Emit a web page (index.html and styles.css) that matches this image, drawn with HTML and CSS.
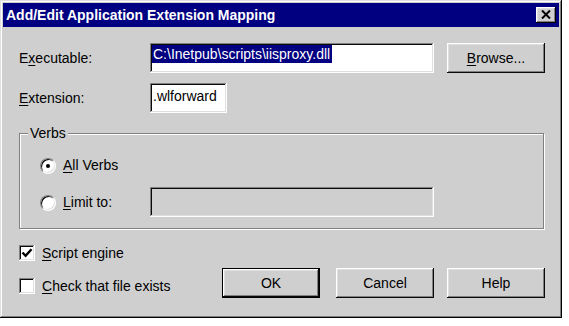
FILE: index.html
```html
<!DOCTYPE html>
<html lang="en">
<head>
    <meta charset="UTF-8">
    <title>Add/Edit Application Extension Mapping</title>
    <link rel="stylesheet" href="styles.css">
</head>
<body>
    <div class="window">
        <div class="titlebar">
            <span class="title">Add/Edit Application Extension Mapping</span>
            <button class="close-btn">
                <svg width="10" height="9" viewBox="0 0 10 9"><path d="M1 0.5 L9 8.5 M9 0.5 L1 8.5" stroke="#000" stroke-width="2"/></svg>
            </button>
        </div>

        <div class="content">
            <div class="row row-exec">
                <span class="field-label">E<u>x</u>ecutable:</span>
                <div class="textbox textbox-wide"><span class="selected">C:\Inetpub\scripts\iisproxy.dll</span></div>
                <button class="btn btn-browse"><u>B</u>rowse...</button>
            </div>

            <div class="row row-ext">
                <span class="field-label"><u>E</u>xtension:</span>
                <div class="textbox textbox-short">.wlforward</div>
            </div>

            <div class="group">
                <span class="group-title">Verbs</span>
                <div class="option">
                    <span class="radio checked"></span>
                    <span class="option-label"><u>A</u>ll Verbs</span>
                </div>
                <div class="option">
                    <span class="radio"></span>
                    <span class="option-label limit-label"><u>L</u>imit to:</span>
                    <div class="textbox textbox-wide disabled"></div>
                </div>
            </div>

            <div class="footer">
                <div class="checks">
                    <div class="check-row">
                        <span class="checkbox">
                            <svg width="12" height="12" viewBox="0 0 12 12"><path d="M1.5 5.5 L4.6 8.8 L10.5 2.2" fill="none" stroke="#000" stroke-width="2.4"/></svg>
                        </span>
                        <span><u>S</u>cript engine</span>
                    </div>
                    <div class="check-row">
                        <span class="checkbox"></span>
                        <span><u>C</u>heck that file exists</span>
                    </div>
                </div>
                <div class="buttons">
                    <button class="btn btn-default">OK</button>
                    <button class="btn btn-cancel">Cancel</button>
                    <button class="btn">Help</button>
                </div>
            </div>
        </div>
    </div>
</body>
</html>
```

FILE: styles.css
```css
* {
    margin: 0;
    padding: 0;
    box-sizing: border-box;
}

body {
    font-family: "Liberation Sans", Arial, sans-serif;
    font-size: 14px;
    color: #000;
    background: #fff;
}

u {
    text-decoration: underline;
    text-underline-offset: 2px;
}

.window {
    width: 562px;
    height: 318px;
    padding: 3px;
    background: #cfcfcf;
    box-shadow: inset -1px -1px #000, inset 1px 1px #dfdfdf, inset -2px -2px #808080, inset 2px 2px #fff;
}

.titlebar {
    height: 24px;
    background: #000080;
    display: flex;
    align-items: center;
    justify-content: space-between;
    padding: 0 3px;
}

.title {
    color: #fff;
    font-weight: bold;
    font-size: 14px;
    line-height: 24px;
}

.close-btn {
    width: 20px;
    height: 16px;
    border: none;
    background: #cfcfcf;
    box-shadow: inset -1px -1px #000, inset 1px 1px #fff, inset -2px -2px #808080, inset 2px 2px #dfdfdf;
    display: flex;
    align-items: center;
    justify-content: center;
    padding-bottom: 1px;
}

.content {
    padding: 0 14px 0 16px;
}

.row {
    display: flex;
    align-items: center;
    height: 30px;
}

.row-exec {
    margin-top: 16px;
}

.row-ext {
    margin-top: 10px;
}

.field-label {
    width: 131px;
}

.textbox {
    height: 30px;
    background: #fff;
    padding: 2px 3px 0 3px;
    line-height: 18px;
    white-space: nowrap;
    overflow: hidden;
    box-shadow: inset -1px -1px #fff, inset 1px 1px #808080, inset -2px -2px #dfdfdf, inset 2px 2px #0a0a0a;
}

.textbox-wide {
    width: 284px;
}

.textbox-short {
    width: 77px;
    padding-top: 4px;
}

.textbox.disabled {
    background: #cfcfcf;
}

.selected {
    display: inline-block;
    background: #000080;
    color: #fff;
    padding: 0 2px 0 1px;
    margin-left: -1px;
}

.btn {
    width: 98px;
    height: 30px;
    border: none;
    background: #cfcfcf;
    font-family: inherit;
    font-size: 14px;
    color: #000;
    box-shadow: inset -1px -1px #0a0a0a, inset 1px 1px #fff, inset -2px -2px #808080, inset 2px 2px #dfdfdf;
}

.btn-browse {
    margin-left: 13px;
}

.btn-default {
    border: 1px solid #000;
}

.group {
    position: relative;
    width: 525px;
    height: 96px;
    margin-top: 20px;
    padding: 16px 0 0 20px;
    border: 1px solid #808080;
    box-shadow: inset 1px 1px #fff, 1px 1px #fff;
}

.group-title {
    position: absolute;
    top: -10px;
    left: 8px;
    padding: 0 2px;
    background: #cfcfcf;
    line-height: 18px;
}

.option {
    display: flex;
    align-items: center;
    height: 30px;
}

.option + .option {
    margin-top: 7px;
}

.radio {
    position: relative;
    width: 16px;
    height: 16px;
    border-radius: 50%;
    background: #fff;
    border: 1px solid;
    border-color: #808080 #fff #fff #808080;
    box-shadow: inset 1px 1px #000, inset -1px -1px #dfdfdf;
    margin-right: 7px;
    margin-top: 2px;
}

.radio.checked::after {
    content: '';
    position: absolute;
    top: 5px;
    left: 5px;
    width: 4px;
    height: 4px;
    border-radius: 50%;
    background: #000;
}

.limit-label {
    width: 87px;
}

.footer {
    display: flex;
    justify-content: space-between;
}

.checks {
    padding-top: 16px;
    display: flex;
    flex-direction: column;
    gap: 17px;
}

.check-row {
    display: flex;
    align-items: center;
    height: 16px;
    gap: 7px;
}

.checkbox {
    width: 16px;
    height: 16px;
    background: #fff;
    display: flex;
    align-items: center;
    justify-content: center;
    box-shadow: inset -1px -1px #fff, inset 1px 1px #808080, inset -2px -2px #dfdfdf, inset 2px 2px #0a0a0a;
}

.buttons {
    display: flex;
    margin-top: 39px;
}

.btn-cancel {
    margin: 0 13px 0 16px;
}
```
